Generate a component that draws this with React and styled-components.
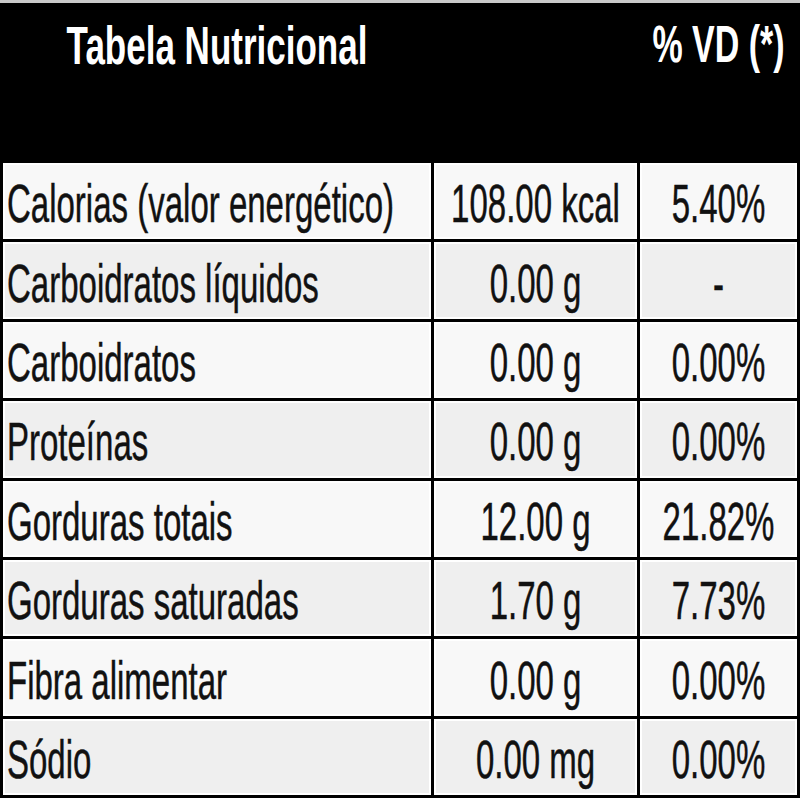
import React from "react"
import styled, { createGlobalStyle } from "styled-components"

const Global = createGlobalStyle`
  html, body {
    margin: 0;
    padding: 0;
    background: #ffffff;
  }
  body {
    font-family: "Liberation Sans", Arial, sans-serif;
  }
`

const Frame = styled.div`
  width: 800px;
  border-top: 3px solid #c9c9c9;
`

const Sheet = styled.table`
  width: 800px;
  table-layout: fixed;
  border-collapse: separate;
  border-spacing: 3px;
  background: #000000;
`

const HeadCell = styled.th`
  height: 154px;
  box-sizing: border-box;
  padding: 21px 0 0;
  border: 0;
  background: #000000;
  color: #ffffff;
  text-align: center;
  vertical-align: top;
  font-weight: 700;
`

const Cell = styled.td`
  height: 76.4px;
  box-sizing: border-box;
  padding: 5px 2px 0;
  border: 2px solid #ffffff;
  background: ${(p) => (p.$shade ? "#efefef" : "#f8f8f8")};
  color: #111111;
  text-align: ${(p) => p.$align || "center"};
  vertical-align: middle;
  white-space: nowrap;
  overflow: hidden;
`

// the reference font is very narrow and tall, so a normal sans is stretched upward
const Label = styled.span`
  display: inline-block;
  font-size: ${(p) => p.$size || 33}px;
  line-height: 1;
  transform: scaleY(${(p) => p.$stretch || 1.65});
  transform-origin: 50% 50%;
  -webkit-text-stroke: ${(p) => (p.$size ? "0" : "0.3px")} currentColor;
`

const rows = [
  ["Calorias (valor energético)", "108.00 kcal", "5.40%"],
  ["Carboidratos líquidos", "0.00 g", "-"],
  ["Carboidratos", "0.00 g", "0.00%"],
  ["Proteínas", "0.00 g", "0.00%"],
  ["Gorduras totais", "12.00 g", "21.82%"],
  ["Gorduras saturadas", "1.70 g", "7.73%"],
  ["Fibra alimentar", "0.00 g", "0.00%"],
  ["Sódio", "0.00 mg", "0.00%"],
]

export default function App() {
  return (
    <>
      <Global />
      <Frame>
        <Sheet>
          <colgroup>
            <col style={{ width: 428 }} />
            <col style={{ width: 203 }} />
            <col style={{ width: 157 }} />
          </colgroup>
          <thead>
            <tr>
              <HeadCell>
                <Label $size={35} $stretch={1.52}>Tabela Nutricional</Label>
              </HeadCell>
              <HeadCell />
              <HeadCell>
                <Label $size={34} $stretch={1.52}>% VD (*)</Label>
              </HeadCell>
            </tr>
          </thead>
          <tbody>
            {rows.map(([name, amount, vd], i) => (
              <tr key={name}>
                <Cell $align="left" $shade={i % 2 === 1}>
                  <Label>{name}</Label>
                </Cell>
                <Cell $shade={i % 2 === 1}>
                  <Label>{amount}</Label>
                </Cell>
                <Cell $shade={i % 2 === 1}>
                  <Label>{vd}</Label>
                </Cell>
              </tr>
            ))}
          </tbody>
        </Sheet>
      </Frame>
    </>
  )
}
